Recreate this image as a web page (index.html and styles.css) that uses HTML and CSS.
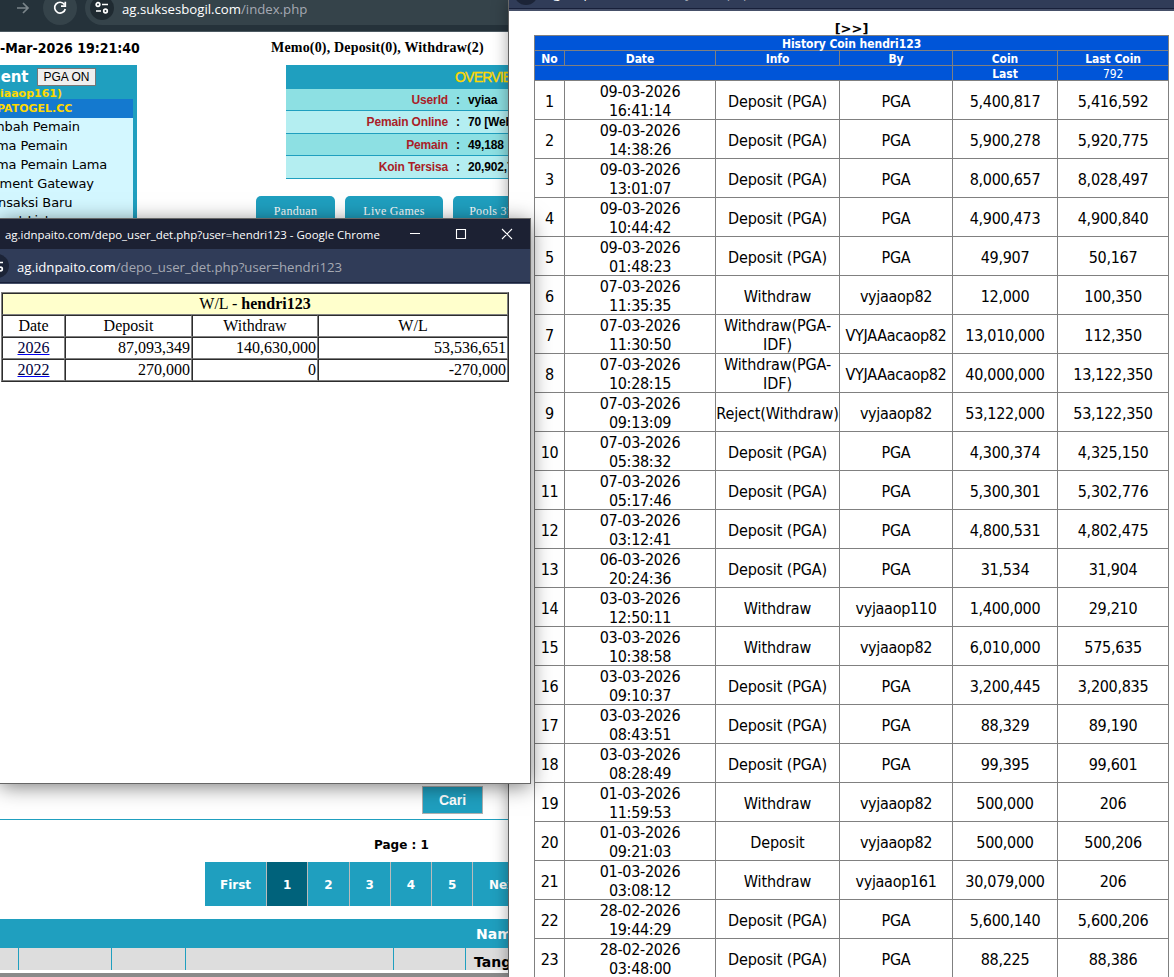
FILE: index.html
```
<!DOCTYPE html>
<html lang="id">
<head>
    <meta charset="UTF-8">
    <title>Agent</title>
    <link rel="stylesheet" href="styles.css">
</head>
<body>

    <!-- main window -->
    <div class="window main-window">
        <div class="main-bar">
            <svg class="forward" width="16" height="16" viewBox="0 0 16 16"><path d="M2 8h11M8 3l5 5-5 5"/></svg>
            <div class="reload-btn">
                <svg width="16" height="16" viewBox="0 0 16 16"><path d="M12.4 4.4A5.4 5.4 0 1 0 13.3 9M13.3 1.8v4.3H9"/></svg>
            </div>
            <div class="address">
                <div class="site-info">
                    <svg width="14" height="14" viewBox="0 0 14 14"><circle cx="3" cy="3.5" r="1.8"/><path d="M7 3.5h6M1 10h5"/><circle cx="10.5" cy="10" r="1.8"/></svg>
                </div>
                <span class="url">ag.suksesbogil.com<i>/index.php</i></span>
            </div>
        </div>

        <div class="page">
            <div class="top">
                <div class="side">
                    <div class="clock">-Mar-2026 19:21:40</div>
                    <div class="menu">
                        <div class="menu-head">
                            <div class="agent"><b>gent</b><button>PGA ON</button></div>
                            <div class="agent-id">iaaop161)</div>
                        </div>
                        <div class="menu-site">PATOGEL.CC</div>
                        <ul>
                            <li class="cut">mbah Pemain</li>
                            <li>ma Pemain</li>
                            <li>ma Pemain Lama</li>
                            <li class="cut">yment Gateway</li>
                            <li class="up">nsaksi Baru</li>
                            <li class="jackpot">kpot List</li>
                        </ul>
                    </div>
                </div>
                <div class="content">
                    <div class="memo">Memo(0), Deposit(0), Withdraw(2)</div>
                    <div class="overview">
                        <h3>OVERVIEW</h3>
                        <div class="row"><label>UserId</label><span>:</span><b>vyiaa</b></div>
                        <div class="row light"><label>Pemain Online</label><span>:</span><b>70 [Web]</b></div>
                        <div class="row"><label>Pemain</label><span>:</span><b>49,188</b></div>
                        <div class="row light"><label>Koin Tersisa</label><span>:</span><b>20,902,7</b></div>
                    </div>
                    <div class="tabs">
                        <span>Panduan</span><span>Live Games</span><span>Pools 3D</span>
                    </div>
                </div>
            </div>

            <div class="bottom">
                <div class="search"><button>Cari</button></div>
                <div class="page-no">Page : 1</div>
                <div class="pager">
                    <span class="first">First</span><span class="active">1</span><span>2</span><span>3</span><span>4</span><span>5</span><span class="next">Next</span>
                </div>
                <div class="list-title">Nama</div>
                <div class="list-head">
                    <div></div><div></div><div></div><div></div><div></div><div>Tanggal</div>
                </div>
                <div class="scroll-edge"></div>
            </div>
        </div>
    </div>

    <!-- coin history -->
    <div class="window history-window">
        <div class="popup-bar">
            <div class="site-info"></div>
            <span class="url">ag.idnpaito.com<i>/history_coin.php</i></span>
        </div>
        <div class="history">
            <div class="more">[&gt;&gt;]</div>
            <table class="coin">
                <colgroup>
                    <col class="no"><col class="date"><col class="info"><col class="by"><col class="amount"><col class="last">
                </colgroup>
                <thead>
                    <tr><th colspan="6">History Coin hendri123</th></tr>
                    <tr><th>No</th><th>Date</th><th>Info</th><th>By</th><th>Coin</th><th>Last Coin</th></tr>
                    <tr><th colspan="4"></th><th>Last</th><td>792</td></tr>
                </thead>
                <tbody class="coin-rows"></tbody>
            </table>
        </div>
    </div>

    <!-- deposit / withdraw popup -->
    <div class="window depo-window">
        <div class="title-bar">
            <span>ag.idnpaito.com/depo_user_det.php?user=hendri123 - Google Chrome</span>
            <svg width="104" height="12" viewBox="0 0 104 12"><path d="M0 5.5h10M46.5 1.5h9v9h-9zM92 1l10 10M102 1l-10 10"/></svg>
        </div>
        <div class="depo-bar">
            <div class="site-info">
                <svg width="14" height="14" viewBox="0 0 14 14"><circle cx="3" cy="3.5" r="1.8"/><path d="M7 3.5h6M1 10h5"/><circle cx="10.5" cy="10" r="1.8"/></svg>
            </div>
            <span class="url">ag.idnpaito.com<i>/depo_user_det.php?user=hendri123</i></span>
        </div>
        <table class="wl">
            <colgroup><col class="year"><col class="depo"><col class="wd"><col></colgroup>
            <tr class="wl-title"><td colspan="4">W/L - <b>hendri123</b></td></tr>
            <tr class="wl-head"><td>Date</td><td>Deposit</td><td>Withdraw</td><td>W/L</td></tr>
            <tr><td><a href="#">2026</a></td><td>87,093,349</td><td>140,630,000</td><td>53,536,651</td></tr>
            <tr><td><a href="#">2022</a></td><td>270,000</td><td>0</td><td>-270,000</td></tr>
        </table>
    </div>

    <script>
        let coinRows = [
            ['09-03-2026', '16:41:14', 'Deposit (PGA)', 'PGA', '5,400,817', '5,416,592'],
            ['09-03-2026', '14:38:26', 'Deposit (PGA)', 'PGA', '5,900,278', '5,920,775'],
            ['09-03-2026', '13:01:07', 'Deposit (PGA)', 'PGA', '8,000,657', '8,028,497'],
            ['09-03-2026', '10:44:42', 'Deposit (PGA)', 'PGA', '4,900,473', '4,900,840'],
            ['09-03-2026', '01:48:23', 'Deposit (PGA)', 'PGA', '49,907', '50,167'],
            ['07-03-2026', '11:35:35', 'Withdraw', 'vyjaaop82', '12,000', '100,350'],
            ['07-03-2026', '11:30:50', 'Withdraw(PGA-<br>IDF)', 'VYJAAacaop82', '13,010,000', '112,350'],
            ['07-03-2026', '10:28:15', 'Withdraw(PGA-<br>IDF)', 'VYJAAacaop82', '40,000,000', '13,122,350'],
            ['07-03-2026', '09:13:09', 'Reject(Withdraw)', 'vyjaaop82', '53,122,000', '53,122,350'],
            ['07-03-2026', '05:38:32', 'Deposit (PGA)', 'PGA', '4,300,374', '4,325,150'],
            ['07-03-2026', '05:17:46', 'Deposit (PGA)', 'PGA', '5,300,301', '5,302,776'],
            ['07-03-2026', '03:12:41', 'Deposit (PGA)', 'PGA', '4,800,531', '4,802,475'],
            ['06-03-2026', '20:24:36', 'Deposit (PGA)', 'PGA', '31,534', '31,904'],
            ['03-03-2026', '12:50:11', 'Withdraw', 'vyjaaop110', '1,400,000', '29,210'],
            ['03-03-2026', '10:38:58', 'Withdraw', 'vyjaaop82', '6,010,000', '575,635'],
            ['03-03-2026', '09:10:37', 'Deposit (PGA)', 'PGA', '3,200,445', '3,200,835'],
            ['03-03-2026', '08:43:51', 'Deposit (PGA)', 'PGA', '88,329', '89,190'],
            ['03-03-2026', '08:28:49', 'Deposit (PGA)', 'PGA', '99,395', '99,601'],
            ['01-03-2026', '11:59:53', 'Withdraw', 'vyjaaop82', '500,000', '206'],
            ['01-03-2026', '09:21:03', 'Deposit', 'vyjaaop82', '500,000', '500,206'],
            ['01-03-2026', '03:08:12', 'Withdraw', 'vyjaaop161', '30,079,000', '206'],
            ['28-02-2026', '19:44:29', 'Deposit (PGA)', 'PGA', '5,600,140', '5,600,206'],
            ['28-02-2026', '03:48:00', 'Deposit (PGA)', 'PGA', '88,225', '88,386']
        ];

        document.querySelector('.coin-rows').innerHTML = coinRows.map((row, i) => {
            let cells = [i + 1, row[0] + '<br>' + row[1], row[2], row[3], row[4], row[5]];
            return `<tr>${cells.map(cell => `<td><p>${cell}</p></td>`).join('')}</tr>`;
        }).join('');
    </script>
</body>
</html>
```

FILE: styles.css
```
body{
    margin: 0;
    height: 977px;
    position: relative;
    overflow: hidden;
    background: #fff;
}
svg{
    fill: none;
    stroke: #fff;
    stroke-width: 1.7;
}
i{
    font-style: normal;
}
.window{
    position: absolute;
    overflow: hidden;
    background: #fff;
}
.main-window{
    left: 0;
    top: 0;
    width: 509px;
    height: 977px;
}
.history-window{
    left: 509px;
    top: 0;
    width: 665px;
    height: 977px;
    box-shadow: 0 0 16px rgba(0,0,0,.4), 0 0 0 1px #777;
}
.depo-window{
    left: 0;
    top: 219px;
    width: 530px;
    height: 564px;
    box-shadow: 0 0 0 1px #666, 0 3px 20px rgba(0,0,0,.55);
}
.url{
    font: 13.2px/18px "Open Sans", "Noto Sans", sans-serif;
    color: #fff;
    white-space: nowrap;
}
.url i{
    color: #a5a9b3;
}

/* main window */
.main-bar{
    display: flex;
    height: 31px;
    background: #25323a;
    border-bottom: 1px solid #4b5961;
}
.main-bar .forward{
    margin: 0 12px 0 15px;
    stroke: #7b858a;
}
.reload-btn{
    width: 34px;
    height: 34px;
    margin-top: -9px;
    border-radius: 50%;
    background: #35434a;
    display: flex;
    align-items: center;
    justify-content: center;
}
.address{
    flex: 1;
    display: flex;
    height: 34px;
    margin: -9px 0 0 8px;
    border-radius: 17px 0 0 17px;
    background: #35434a;
    align-items: center;
}
.site-info{
    width: 24px;
    height: 24px;
    border-radius: 50%;
    background: #1f2a31;
    display: flex;
    flex-shrink: 0;
    align-items: center;
    justify-content: center;
}
.address .site-info{
    margin: 0 8px 0 5px;
}
.address .url{
    padding-top: 2px;
}
.top{
    display: flex;
    height: 754px;
}
.side{
    width: 256px;
    font-family: Verdana, "DejaVu Sans", sans-serif;
}
.clock{
    height: 33px;
    font: bold 14px/33px "DejaVu Sans Condensed", sans-serif;
}
.menu{
    width: 133px;
    border-right: 4px solid #1f9fbf;
    background: #d3f7ff;
    font-size: 13px;
    letter-spacing: -.1px;
    white-space: nowrap;
}
.menu-head{
    height: 34px;
    width: 137px;
    background: #1f9fbf;
}
.agent{
    display: flex;
    height: 21px;
    align-items: flex-end;
}
.agent b{
    width: 37px;
    color: #fff;
    font-size: 15px;
    line-height: 18px;
    text-indent: -10px;
}
.agent button{
    width: 59px;
    height: 18px;
    padding: 0;
    border: 1px solid #777;
    background: #efefef;
    font: 12px "Liberation Sans", sans-serif;
}
.agent-id{
    color: #ffd800;
    font-size: 11px;
    font-weight: bold;
    line-height: 15px;
    letter-spacing: 0;
}
.menu-site{
    height: 19px;
    background: #1479cf;
    color: #ffd800;
    font-size: 11px;
    font-weight: bold;
    line-height: 20px;
    text-indent: -3px;
    letter-spacing: 0;
}
.menu ul{
    margin: 0;
    padding: 0;
    list-style: none;
}
.menu li{
    height: 19px;
    line-height: 18px;
    text-indent: -4px;
}
.menu .cut{
    text-indent: -8px;
}
.menu .up{
    height: 18px;
    line-height: 17px;
    text-indent: -2px;
}
.menu .jackpot{
    text-indent: -5px;
}
.content{
    width: 253px;
}
.memo{
    padding-left: 15px;
    font: bold 14px/32px "Liberation Serif", serif;
    height: 33px;
    letter-spacing: .18px;
    white-space: nowrap;
}
.overview{
    margin-left: 30px;
    font: bold 12px "Liberation Sans", sans-serif;
    letter-spacing: -.15px;
    overflow: hidden;
}
.overview h3{
    margin: 0;
    height: 24px;
    padding-left: 169px;
    background: #1f9fbf;
    color: #ffd800;
    font-size: 14px;
    font-weight: normal;
    -webkit-text-stroke: .4px #ffd800;
    line-height: 24px;
    letter-spacing: -.8px;
}
.row{
    display: flex;
    height: 21px;
    line-height: 22px;
    background: #8de0e3;
    border-bottom: 1px solid #1f9fbf;
    white-space: nowrap;
}
.row.light{
    height: 22px;
    line-height: 23px;
    background: #b4eef1;
}
.row label{
    width: 162px;
    flex-shrink: 0;
    text-align: right;
    color: #aa1e28;
}
.row span{
    width: 20px;
    flex-shrink: 0;
    text-align: center;
}
.tabs{
    display: flex;
    gap: 10px;
    margin-top: 17px;
    overflow: hidden;
}
.tabs span{
    flex-shrink: 0;
    width: 79px;
    height: 28px;
    border-radius: 5px 5px 0 0;
    background: #1f9fbf;
    color: #fff;
    font: 12px/30px "Liberation Serif", serif;
    letter-spacing: .3px;
    text-align: center;
}
.tabs span:nth-child(2){
    width: 98px;
}
.bottom{
    font: bold 13px "DejaVu Sans", sans-serif;
}
.search{
    height: 33px;
    border-bottom: 1px solid #1f9fbf;
}
.search button{
    display: block;
    width: 61px;
    height: 28px;
    margin-left: 422px;
    padding: 0;
    border: 1px solid #b0b0b0;
    background: #1f9fbf;
    color: #fff;
    font: bold 14px "Liberation Sans", sans-serif;
}
.page-no{
    padding: 16px 0 8px 374px;
    font-size: 12px;
    line-height: 18px;
}
.pager{
    display: flex;
    margin-left: 205px;
    height: 44px;
    font-size: 12px;
    line-height: 46px;
    color: #fff;
    text-align: center;
}
.pager span{
    box-sizing: border-box;
    height: 44px;
    flex: 0 0 41.25px;
    background: #1f9fbf;
    border-right: 1px solid #bbb;
}
.pager .first{
    flex-basis: 62px;
}
.pager .active{
    background: #00627b;
}
.pager .next{
    flex-basis: 64px;
}
.list-title{
    height: 29px;
    margin-top: 13px;
    padding-left: 476px;
    background: #1f9fbf;
    color: #fff;
    font-size: 14px;
    line-height: 30px;
}
.list-head{
    display: grid;
    grid-template-columns: 19px 93px 74px 208px 72px 100px;
    height: 22px;
    overflow: hidden;
    background: #ddd;
    font-size: 14px;
    line-height: 29px;
}
.list-head div{
    border-right: 1px solid #1f9fbf;
    text-indent: 8px;
}
.scroll-edge{
    height: 4px;
    margin-top: 3px;
    background: #8a8a8a;
}

/* coin history */
.popup-bar{
    display: flex;
    height: 8px;
    background: #303c58;
    border-bottom: 1px solid #18203a;
    box-shadow: 0 2px 0 #465069;
    overflow: hidden;
}
.popup-bar .site-info{
    margin: -19px 8px 0 5px;
    background: #1c2437;
}
.popup-bar .url{
    margin-top: -16px;
}
.history{
    padding: 11px 0 0 25px;
    font-family: "DejaVu Sans Condensed", "DejaVu Sans", sans-serif;
}
.more{
    width: 635px;
    height: 15px;
    font: bold 13px/17px "DejaVu Sans", sans-serif;
    text-align: center;
}
.coin{
    width: 635px;
    table-layout: fixed;
    border-collapse: collapse;
    text-align: center;
    font-size: 16px;
    line-height: 19px;
    letter-spacing: -.3px;
}
.coin .no{
    width: 30px;
}
.coin .date{
    width: 151px;
}
.coin .info{
    width: 124px;
}
.coin .by{
    width: 113px;
}
.coin .amount{
    width: 105px;
}
.coin .last{
    width: 111px;
}
.coin th, .coin td{
    padding: 0;
    border: 1px solid #808080;
    white-space: nowrap;
}
.coin thead tr{
    height: 15px;
    background: #0055d8;
    color: #fff;
    font-size: 12px;
    line-height: 12px;
    letter-spacing: -.05px;
}
.coin thead th, .coin thead td{
    padding-top: 2px;
}
.coin tbody tr{
    height: 39px;
}
.coin p{
    margin: 1px 0 -1px;
}
.coin td:nth-child(3){
    letter-spacing: -.1px;
}

/* deposit / withdraw popup */
.title-bar{
    display: flex;
    height: 30px;
    padding-left: 5px;
    background: #1c2133;
    align-items: center;
    color: #fff;
    font: 11.45px "Open Sans", "Noto Sans", sans-serif;
}
.title-bar span{
    width: 405px;
    white-space: nowrap;
}
.title-bar svg{
    stroke-width: 1.1;
}
.depo-bar{
    display: flex;
    height: 33px;
    background: #303c58;
    border-bottom: 1px solid #18203a;
    box-shadow: 0 1px 0 #465069;
    align-items: center;
}
.depo-bar .url{
    padding-top: 2px;
}
.depo-bar .site-info{
    margin: 0 8px 0 -15px;
    background: #1c2437;
}
.wl{
    width: 508px;
    margin: 9px 0 0 1px;
    table-layout: fixed;
    border-spacing: 0;
    border: 1px solid #808080;
    border-right-color: #2c2c2c;
    border-bottom-color: #2c2c2c;
    font: 16px/18px "Liberation Serif", serif;
}
.wl .year{
    width: 63px;
}
.wl .depo{
    width: 127px;
}
.wl .wd{
    width: 126px;
}
.wl td{
    height: 18px;
    padding: 1px;
    border: 1px solid #2c2c2c;
    border-right-color: #808080;
    border-bottom-color: #808080;
    text-align: right;
}
.wl .wl-title td{
    background: #ffffcc;
    text-align: center;
}
.wl .wl-head td, .wl td:first-child{
    text-align: center;
}
.wl a{
    color: #000040;
    text-decoration-color: #0000ee;
}
```
